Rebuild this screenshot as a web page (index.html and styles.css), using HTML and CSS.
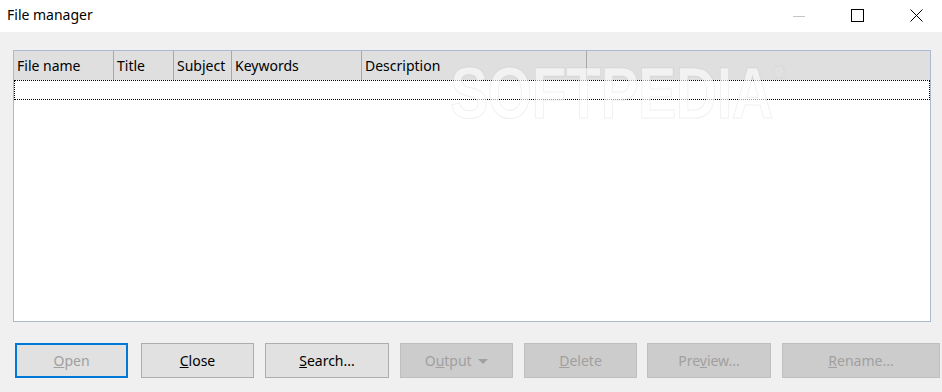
FILE: index.html
```html
<!DOCTYPE html>
<html lang="en">
  <head>
    <meta charset="UTF-8" />
    <title>File manager</title>
    <link rel="stylesheet" href="styles.css">
  </head>
  <body>
    <div class="titlebar">
      <span class="title">File manager</span>
      <div class="controls">
        <span class="ctl min"><svg width="12" height="12" viewBox="0 0 12 12"><path d="M0 6.5H12" stroke="#c4c4c4" stroke-width="1"/></svg></span>
        <span class="ctl max"><svg width="13" height="13" viewBox="0 0 13 13"><rect x="0.5" y="0.5" width="12" height="12" fill="none" stroke="#000" stroke-width="1"/></svg></span>
        <span class="ctl close"><svg width="13" height="13" viewBox="0 0 13 13"><path d="M0.5 0.5L12.5 12.5M12.5 0.5L0.5 12.5" stroke="#000" stroke-width="1"/></svg></span>
      </div>
    </div>
    <div class="content">
      <div class="listbox">
        <div class="header">
          <div class="col c1">File name</div>
          <div class="col c2">Title</div>
          <div class="col c3">Subject</div>
          <div class="col c4">Keywords</div>
          <div class="col c5">Description</div>
          <div class="col rest"></div>
        </div>
        <div class="focusrow"></div>
        <div class="watermark">SOFTPEDIA<sup>®</sup></div>
      </div>
      <div class="buttons">
        <button class="btn focus"><u>O</u>pen</button>
        <button class="btn active"><u>C</u>lose</button>
        <button class="btn active wide"><u>S</u>earch...</button>
        <button class="btn off">O<u>u</u>tput <svg class="arrow" width="10" height="5" viewBox="0 0 10 5"><path d="M0 0H10L5 5Z" fill="#a0a0a0"/></svg></button>
        <button class="btn off tight"><u>D</u>elete</button>
        <button class="btn off wide">Pre<u>v</u>iew...</button>
        <button class="btn off widest"><u>R</u>ename...</button>
      </div>
    </div>
  </body>
</html>
```

FILE: styles.css
```css
body {
  margin: 0;
  width: 942px;
  height: 392px;
  overflow: hidden;
  background: #f0f0f0;
  font-family: "Noto Sans", "Open Sans", sans-serif;
  font-size: 14px;
  color: #000;
}
.titlebar {
  height: 32px;
  background: #fff;
  display: flex;
  align-items: center;
  justify-content: space-between;
}
.title {
  padding-left: 7px;
  font-size: 14px;
  margin-top: -4px;
}
.controls {
  display: flex;
  align-self: flex-start;
  padding-top: 7px;
}
.ctl {
  display: block;
  height: 13px;
}
.min {
  margin-right: 46px;
}
.max {
  margin-right: 46px;
}
.close {
  margin-right: 19px;
}
.content {
  padding: 18px 0 0 13px;
}
.listbox {
  position: relative;
  width: 916px;
  height: 270px;
  border: 1px solid #abb9d1;
  background: #fff;
  overflow: hidden;
}
.header {
  display: flex;
  height: 29px;
  background: #dfdfdf;
}
.col {
  box-sizing: border-box;
  border-right: 1px solid #a8a8a8;
  padding: 5px 0 0 3px;
  white-space: nowrap;
  overflow: hidden;
}
.c1 { width: 100px; }
.c2 { width: 60px; }
.c3 { width: 58px; }
.c4 { width: 130px; }
.c5 { width: 225px; }
.rest {
  flex: 1;
  border-right: none;
}
.focusrow {
  height: 20px;
  box-sizing: border-box;
  border: 1px dotted #000;
}
.watermark {
  position: absolute;
  left: 436px;
  top: 1px;
  font-family: "Liberation Sans", Arial, sans-serif;
  font-weight: bold;
  font-size: 72px;
  letter-spacing: -1px;
  color: rgba(255, 255, 255, 0.6);
  -webkit-text-stroke: 1px rgba(0, 0, 0, 0.07);
  transform: scaleX(0.8);
  transform-origin: left top;
  pointer-events: none;
}
.watermark sup {
  font-size: 22px;
  font-weight: normal;
  vertical-align: 38px;
}
.buttons {
  display: flex;
  gap: 11px;
  margin-top: 21px;
  padding-left: 2px;
}
.btn {
  box-sizing: border-box;
  width: 113px;
  height: 35px;
  font-family: inherit;
  font-size: 14px;
  padding: 0;
  margin: 0;
  background: #e1e1e1;
  border: 1px solid #adadad;
  color: #000;
}
.btn.wide { width: 124px; }
.btn.widest { width: 158px; }
.btn.tight { margin-right: -1px; }
.btn.focus {
  border: 2px solid #0078d7;
  color: #a0a0a0;
  margin-right: 2px;
}
.btn.off {
  background: #cccccc;
  border-color: #bfbfbf;
  color: #a0a0a0;
}
.arrow {
  vertical-align: 2px;
  margin-left: 3px;
}
```
